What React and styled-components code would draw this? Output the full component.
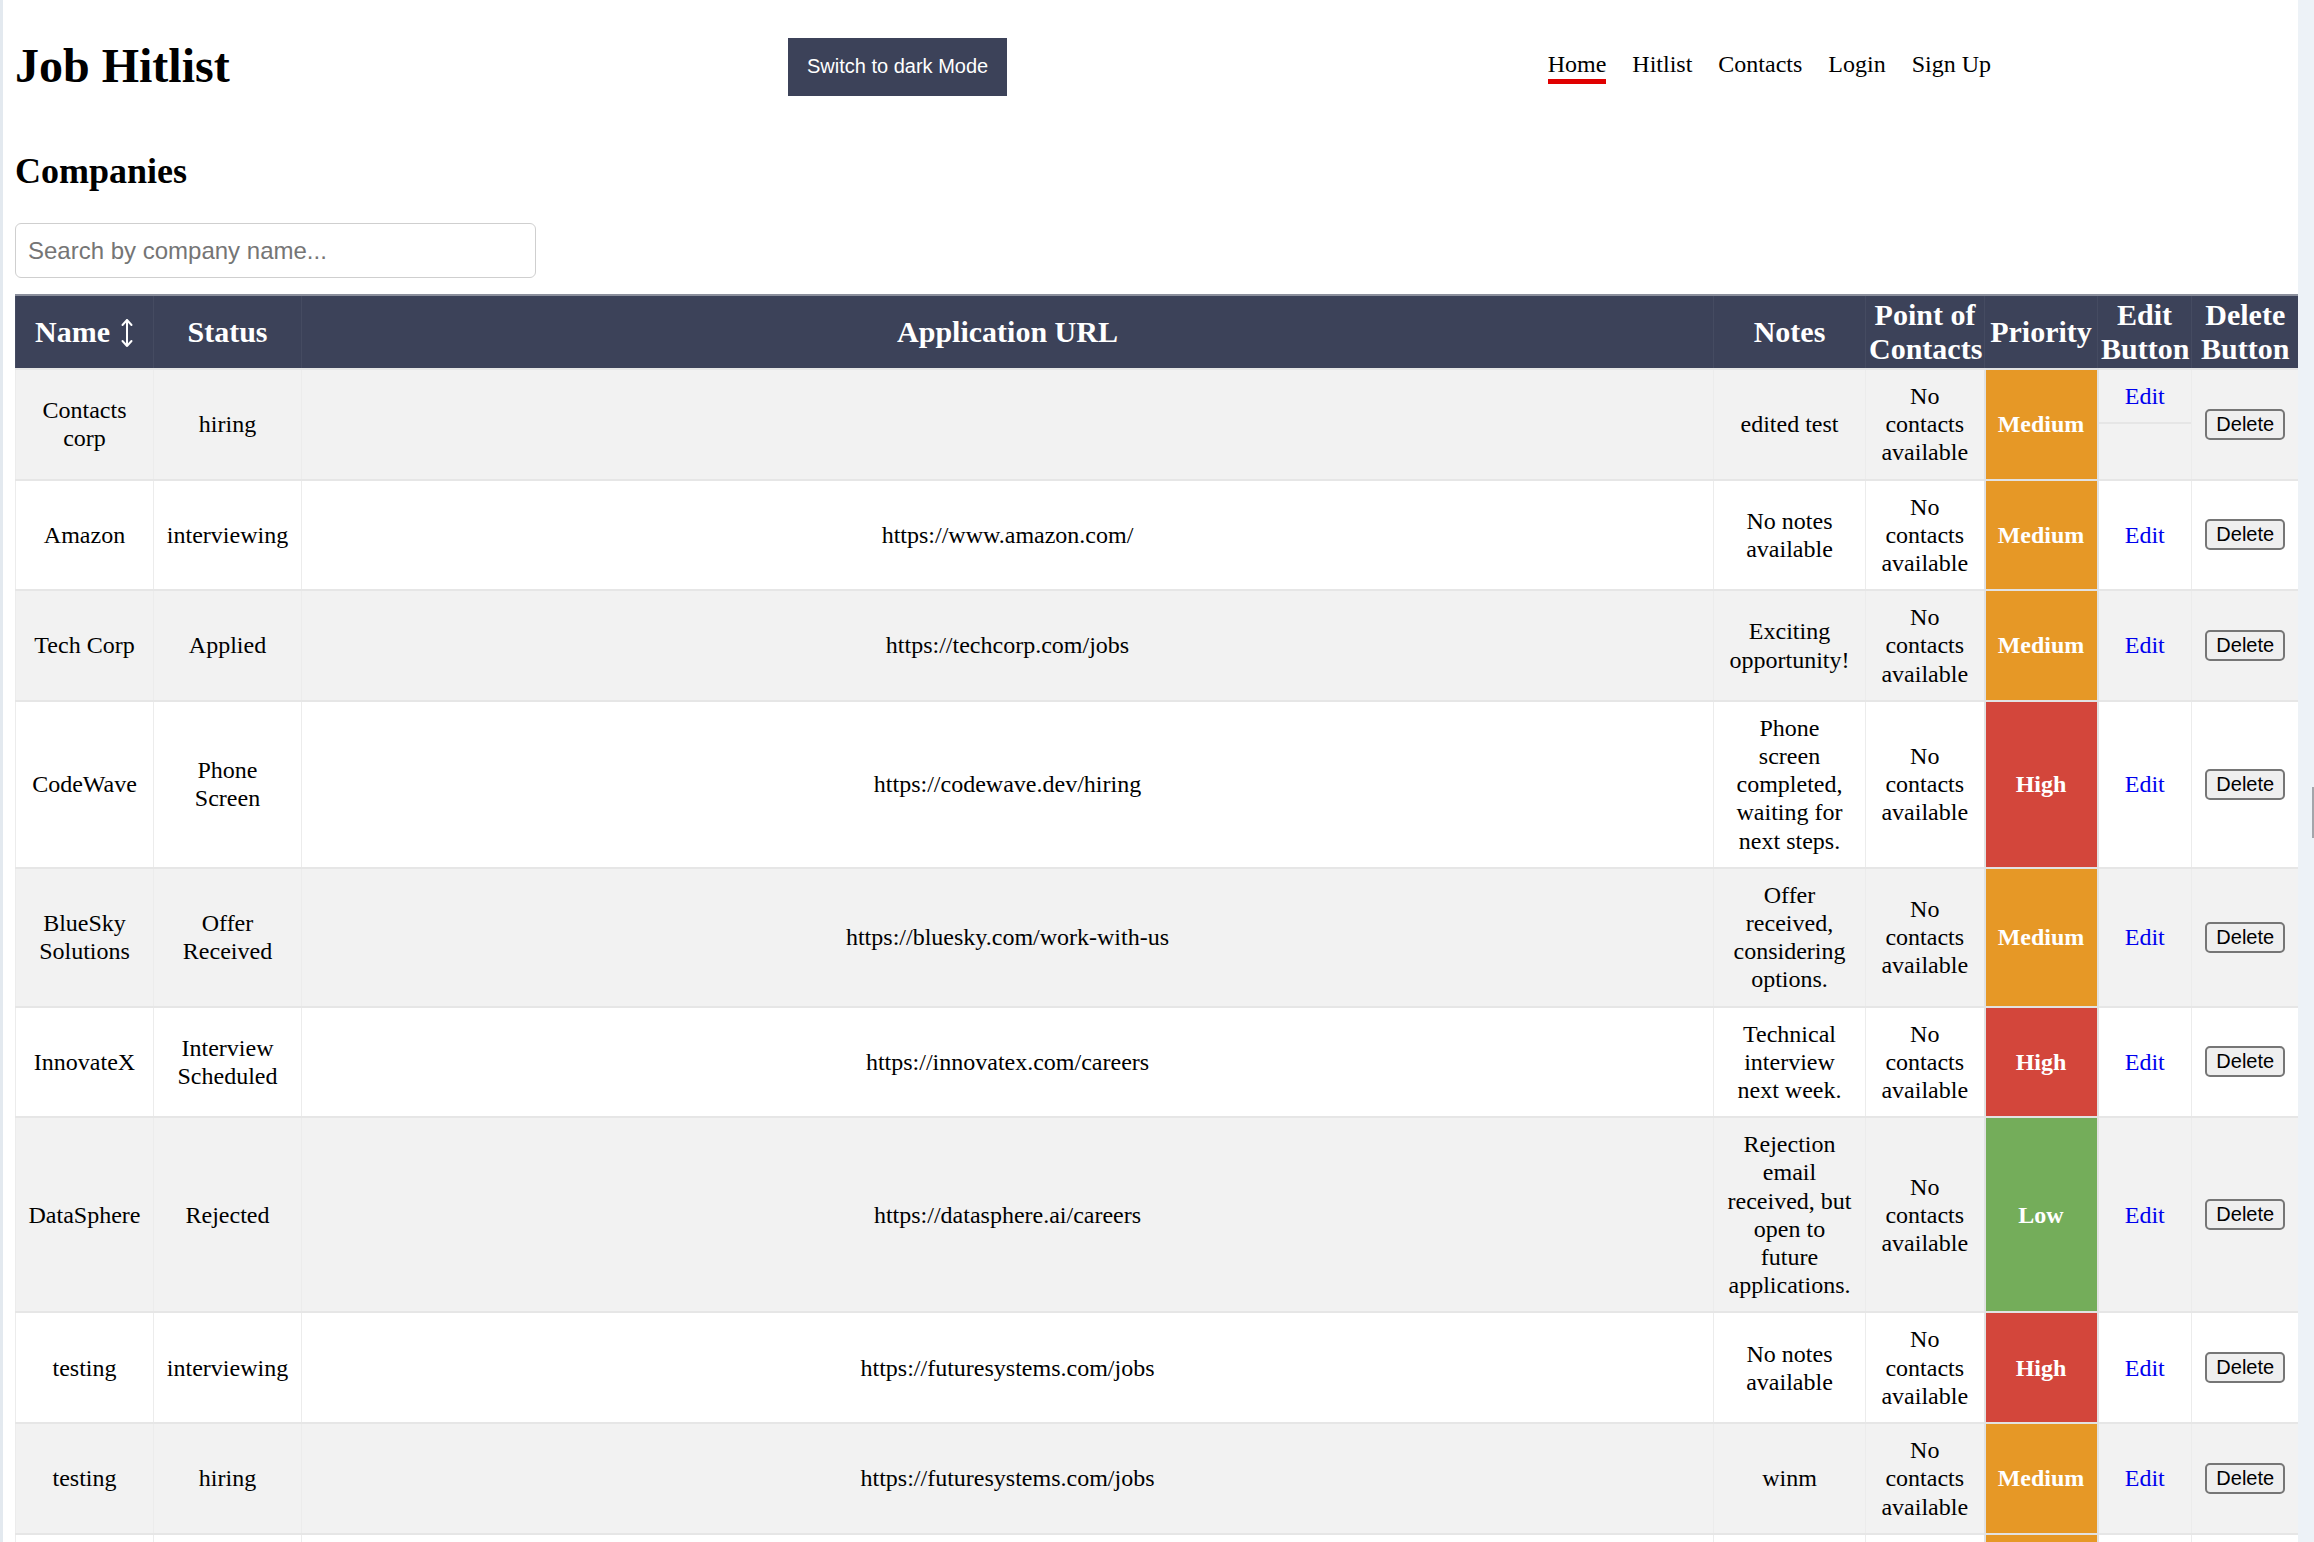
import React from 'react'
import styled, { createGlobalStyle } from 'styled-components'

const GlobalStyle = createGlobalStyle`
  html, body {
    margin: 0;
    padding: 0;
    background: #ffffff;
  }
  body {
    font-family: 'Liberation Serif', 'Times New Roman', serif;
    color: #000;
  }
  * {
    box-sizing: border-box;
  }
`

const Shell = styled.div`
  display: flex;
  min-height: 100vh;
  border-left: 3px solid #e3e9ef;
`
const Content = styled.main`
  flex: 1;
  min-width: 0;
  padding-left: 12px;
`
const Rail = styled.div`
  position: relative;
  width: 16px;
  flex-shrink: 0;
  background: #edf2f7;
`
const RailMark = styled.span`
  position: absolute; // little scroll marker sitting over the rail
  top: 787px;
  right: 0;
  width: 2px;
  height: 51px;
  background: #a3a6ab;
`

const Header = styled.header`
  display: grid;
  grid-template-columns: 773px auto 1fr;
  align-items: center;
  height: 130px;
`
const Title = styled.h1`
  margin: 0;
  font-size: 48px;
  font-weight: 700;
  line-height: 55px;
`
const ModeButton = styled.button`
  background: #3c4259;
  color: #ffffff;
  border: none;
  font-family: 'Liberation Sans', Arial, sans-serif;
  font-size: 20px;
  line-height: 23px;
  padding: 17.5px 19px;
  margin-top: 3px;
  cursor: pointer;
`
const Nav = styled.nav`
  justify-self: end;
  display: flex;
  gap: 26px;
  margin-right: 307px;
  padding-top: 3px;
`
const NavLink = styled.a`
  font-size: 24px;
  line-height: 28px;
  color: #000;
  text-decoration: none;
  padding-bottom: 1px;
  border-bottom: 5px solid ${p => (p.$active ? '#e00000' : 'transparent')};
`

const SectionTitle = styled.h2`
  margin: 21px 0 31px;
  font-size: 36px;
  font-weight: 700;
  line-height: 41px;
`
const Search = styled.input`
  display: block;
  width: 521px;
  height: 55px;
  padding: 0 12px;
  border: 1.5px solid #cfcfcf;
  border-radius: 6px;
  font-family: 'Liberation Sans', Arial, sans-serif;
  font-size: 24px;
  color: #222;
  margin-bottom: 16px;
  &::placeholder {
    color: #757575;
  }
`

const Table = styled.table`
  width: 2283px;
  table-layout: fixed;
  border-collapse: collapse;
`
const Col = styled.col`
  width: ${p => p.$width}px;
`
const HeadRow = styled.tr`
  border-top: 2px solid #8b8f9c;
`
const Th = styled.th`
  background: #3c4259;
  color: #ffffff;
  font-size: 30px;
  font-weight: 700;
  line-height: 34px;
  padding: 2px 3px;
  text-align: center;
  vertical-align: middle;
  border-left: 1px solid #454b61;
`
const SortIcon = styled.svg`
  width: 14px;
  height: 30px;
  margin-left: 10px;
  vertical-align: -6px;
`
const Row = styled.tr`
  background: ${p => (p.$striped ? '#f2f2f2' : '#ffffff')};
`
const Td = styled.td`
  padding: 12px;
  font-size: 24px;
  line-height: 28.2px;
  text-align: center;
  vertical-align: middle;
  border-top: 2px solid #e6e6e6;
  border-left: 1px solid #ececec;
  overflow-wrap: break-word;
`
const PriorityCell = styled(Td)`
  background: ${p => p.$bg};
  color: #ffffff;
  font-weight: 700;
  border: 2px solid #e2e2e2;
`
const EditCell = styled(Td)`
  padding: ${p => (p.$split ? '0' : '12px')};
  vertical-align: ${p => (p.$split ? 'top' : 'middle')};
`
const EditSlot = styled.div`
  padding: 12px;
  border-bottom: 2px solid #e6e6e6;
`
const EditLink = styled.a`
  color: #0000ee;
  text-decoration: none;
  cursor: pointer;
`
const DeleteButton = styled.button`
  font-family: 'Liberation Sans', Arial, sans-serif;
  font-size: 20px;
  line-height: 23px;
  padding: 2px 9px;
  color: #000;
  background: #efefef;
  border: 2px solid #767676;
  border-radius: 5px;
  cursor: pointer;
`

const PRIORITY_COLORS = {
  High: '#d3463b',
  Medium: '#e69826',
  Low: '#74ad5a'
}

const companies = [
  { name: 'Contacts corp', status: 'hiring', url: '', notes: 'edited test', priority: 'Medium' },
  { name: 'Amazon', status: 'interviewing', url: 'https://www.amazon.com/', notes: 'No notes available', priority: 'Medium' },
  { name: 'Tech Corp', status: 'Applied', url: 'https://techcorp.com/jobs', notes: 'Exciting opportunity!', priority: 'Medium' },
  { name: 'CodeWave', status: 'Phone Screen', url: 'https://codewave.dev/hiring', notes: 'Phone screen completed, waiting for next steps.', priority: 'High' },
  { name: 'BlueSky Solutions', status: 'Offer Received', url: 'https://bluesky.com/work-with-us', notes: 'Offer received, considering options.', priority: 'Medium' },
  { name: 'InnovateX', status: 'Interview Scheduled', url: 'https://innovatex.com/careers', notes: 'Technical interview next week.', priority: 'High' },
  { name: 'DataSphere', status: 'Rejected', url: 'https://datasphere.ai/careers', notes: 'Rejection email received, but open to future applications.', priority: 'Low' },
  { name: 'testing', status: 'interviewing', url: 'https://futuresystems.com/jobs', notes: 'No notes available', priority: 'High' },
  { name: 'testing', status: 'hiring', url: 'https://futuresystems.com/jobs', notes: 'winm', priority: 'Medium' },
  { name: 'testing', status: 'hiring', url: 'https://futuresystems.com/jobs', notes: 'No notes available', priority: 'Medium' }
]

const columns = [138, 148, 1412, 152, 119, 113, 94, 107]

export default function App () {
  return (
    <>
      <GlobalStyle />
      <Shell>
        <Content>
          <Header>
            <Title>Job Hitlist</Title>
            <ModeButton>Switch to dark Mode</ModeButton>
            <Nav>
              <NavLink $active>Home</NavLink>
              <NavLink>Hitlist</NavLink>
              <NavLink>Contacts</NavLink>
              <NavLink>Login</NavLink>
              <NavLink>Sign Up</NavLink>
            </Nav>
          </Header>

          <SectionTitle>Companies</SectionTitle>
          <Search type="text" placeholder="Search by company name..." />

          <Table>
            <colgroup>
              {columns.map((w, i) => <Col key={i} $width={w} />)}
            </colgroup>
            <thead>
              <HeadRow>
                <Th>
                  Name
                  <SortIcon viewBox="0 0 14 30" fill="none" stroke="#ffffff" strokeWidth="2" strokeLinecap="round" strokeLinejoin="round">
                    <path d="M7 2V28M2.5 7L7 2L11.5 7M2.5 23L7 28L11.5 23" />
                  </SortIcon>
                </Th>
                <Th>Status</Th>
                <Th>Application URL</Th>
                <Th>Notes</Th>
                <Th>Point of Contacts</Th>
                <Th>Priority</Th>
                <Th>Edit Button</Th>
                <Th>Delete Button</Th>
              </HeadRow>
            </thead>
            <tbody>
              {companies.map((c, i) => (
                <Row key={i} $striped={i % 2 === 0}>
                  <Td>{c.name}</Td>
                  <Td>{c.status}</Td>
                  <Td>{c.url}</Td>
                  <Td>{c.notes}</Td>
                  <Td>No contacts available</Td>
                  <PriorityCell $bg={PRIORITY_COLORS[c.priority]}>{c.priority}</PriorityCell>
                  {i === 0
                    ? (
                      <EditCell $split>
                        <EditSlot><EditLink>Edit</EditLink></EditSlot>
                      </EditCell>
                      )
                    : (
                      <EditCell><EditLink>Edit</EditLink></EditCell>
                      )}
                  <Td><DeleteButton>Delete</DeleteButton></Td>
                </Row>
              ))}
            </tbody>
          </Table>
        </Content>
        <Rail>
          <RailMark />
        </Rail>
      </Shell>
    </>
  )
}
